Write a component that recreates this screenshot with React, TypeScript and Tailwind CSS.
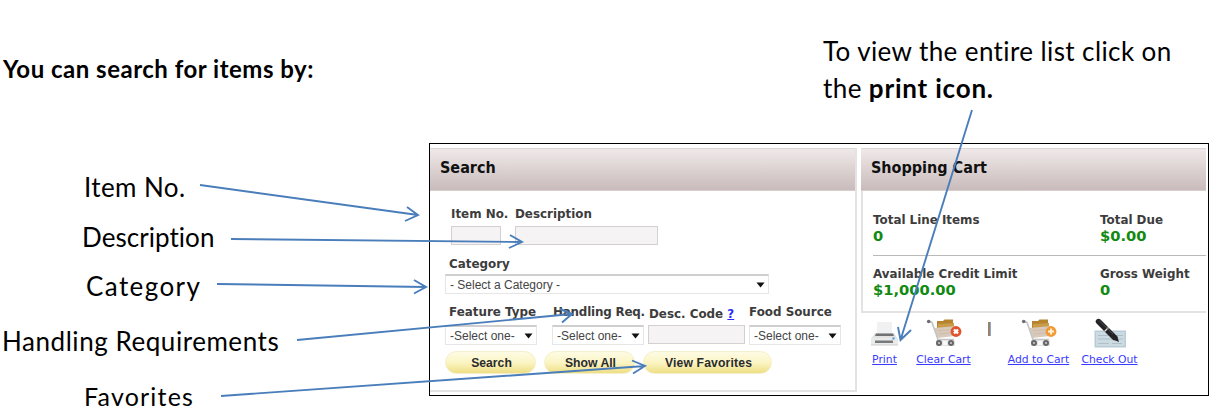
import type { ReactNode } from "react";
import clsx from "clsx";

const arrows = [
  "M200 185L418 215M407 207L418 215L405 221",
  "M231 239L522 242M510 235L522 242L509 248",
  "M217 284L426 287M414 280L426 287L414 293.5",
  "M297 340L572 314M560 309L572 314L562 322.5",
  "M221 396L645 366M632 360.5L645 366L633 373.5",
  "M972 110L900.5 340M898 327L900.5 340L911 330",
];

export default function App() {
  return (
    <div className="relative flex h-[410px] w-[1224px] overflow-hidden bg-white">
      <Notes />
      <div className="flex w-[795px] shrink-0 flex-col">
        <p className="mt-[33px] ml-[394px] h-[73px] font-['Lato',sans-serif] text-[26px] leading-[37px] tracking-[0.4px] whitespace-nowrap text-black">
          To view the entire list click on
          <br />
          the <strong className="font-bold tracking-[0.8px]">print icon.</strong>
        </p>
        <div className="mt-[37px] flex h-[253px] w-[780px] gap-[4px] border border-black pt-[4px] font-['DejaVu_Sans',sans-serif]">
          <SearchPanel />
          <CartPanel />
        </div>
      </div>
      <svg
        className="pointer-events-none absolute inset-0"
        width="1224"
        height="410"
        fill="none"
        stroke="#4a7ebb"
        strokeWidth="1.9"
      >
        {arrows.map((d) => (
          <path key={d} d={d} />
        ))}
      </svg>
    </div>
  );
}

function Notes() {
  return (
    <div className="flex w-[429px] shrink-0 flex-col font-['Lato',sans-serif] text-[26px] leading-[32px] whitespace-nowrap text-black [font-variant-ligatures:none]">
      <h1 className="mt-[53px] ml-[3px] text-[24px] leading-[32px] font-bold tracking-[0.5px]">
        You can search for items by:
      </h1>
      <p className="mt-[86px] ml-[84px] tracking-[0.4px]">Item No.</p>
      <p className="mt-[18px] ml-[82px] tracking-[0.05px]">Description</p>
      <p className="mt-[17px] ml-[86px] tracking-[1.4px]">Category</p>
      <p className="mt-[23px] ml-[2px] tracking-[0.55px]">Handling Requirements</p>
      <p className="mt-[25px] ml-[84px] text-[25px] leading-[28px] tracking-[1.2px]">
        Favorites
      </p>
    </div>
  );
}

function PanelTitle({ children }: { children: ReactNode }) {
  return (
    <h2 className="h-[43px] border-t border-b border-t-[#dcd6d6] border-b-[#d8cece] bg-linear-to-b from-[#f0e9e9] to-[#c9bbbb] pl-[10px] font-['DejaVu_Sans_Condensed','DejaVu_Sans',sans-serif] text-[16px] leading-[37px] font-bold text-[#111] [font-stretch:condensed]">
      {children}
    </h2>
  );
}

function Label({ children, className }: { children: ReactNode; className?: string }) {
  return (
    <span
      className={clsx(
        "block text-[11.9px] leading-[14px] font-bold whitespace-nowrap text-[#3c3c3c]",
        className
      )}
    >
      {children}
    </span>
  );
}

function TextBox({ className }: { className: string }) {
  return (
    <div
      className={clsx("h-[19px] border border-[#d6cfd1] bg-[#f6f3f5]", className)}
    />
  );
}

function SelectBox({ children, className }: { children: ReactNode; className: string }) {
  return (
    <div
      className={clsx(
        "flex h-[20px] items-center justify-between border border-t-2 border-[#e6e6e6] border-t-[#cfcfcf] bg-white pr-[3px] pl-[4px] font-['Liberation_Sans',sans-serif] text-[12px] leading-[14px] whitespace-nowrap text-[#444]",
        className
      )}
    >
      {children}
      <svg width="9" height="6" viewBox="0 0 9 6" className="shrink-0">
        <path d="M0.5 0.5H8.5L4.5 5.5Z" fill="#111" />
      </svg>
    </div>
  );
}

function PillButton({ children, className }: { children: ReactNode; className: string }) {
  return (
    <button
      className={clsx(
        "h-[23px] rounded-full border border-[#f5efcb] bg-linear-to-b from-[#fdfbe4] via-[#fbf5c4] to-[#eede83] pt-px pl-[2px] font-['Liberation_Sans',sans-serif] text-[12.2px] leading-[20px] font-bold text-[#2b2b2b]",
        className
      )}
    >
      {children}
    </button>
  );
}

function SearchPanel() {
  return (
    <section className="h-[244px] w-[427px] border-r-2 border-b-2 border-[#e4e2e2]">
      <PanelTitle>Search</PanelTitle>
      <div className="pt-[16px] pl-[15px]">
        <div className="flex gap-[14px] pl-[6px]">
          <div className="w-[50px]">
            <Label>Item No.</Label>
            <TextBox className="mt-[5px] w-[50px]" />
          </div>
          <div>
            <Label>Description</Label>
            <TextBox className="mt-[5px] w-[143px]" />
          </div>
        </div>
        <Label className="mt-[12px] pl-[4px]">Category</Label>
        <SelectBox className="mt-[3px] w-[324px]">- Select a Category -</SelectBox>
        <div className="mt-[11px] flex">
          <div className="w-[107px]">
            <Label className="pl-[4px]">Feature Type</Label>
            <SelectBox className="mt-[6px] w-[92px]">-Select one-</SelectBox>
          </div>
          <div className="w-[96px]">
            <Label className="pl-px tracking-[-0.2px]">Handling Req.</Label>
            <SelectBox className="mt-[6px] w-[92px]">-Select one-</SelectBox>
          </div>
          <div className="w-[101px]">
            <Label className="pt-[2px] pl-px">
              Desc. Code <a className="text-[#2a2aff] underline">?</a>
            </Label>
            <TextBox className="mt-[4px] w-[97px]" />
          </div>
          <div>
            <Label>Food Source</Label>
            <SelectBox className="mt-[6px] w-[92px]">-Select one-</SelectBox>
          </div>
        </div>
        <div className="mt-[6px] flex gap-[8px]">
          <PillButton className="w-[91px]">Search</PillButton>
          <PillButton className="w-[91px]">Show All</PillButton>
          <PillButton className="w-[129px] tracking-[0.15px]">View Favorites</PillButton>
        </div>
      </div>
    </section>
  );
}

function Stat({ label, value }: { label: string; value: string }) {
  return (
    <div>
      <Label>{label}</Label>
      <span className="block text-[14.7px] leading-[18px] font-bold text-[#118a11]">
        {value}
      </span>
    </div>
  );
}

function CartPanel() {
  return (
    <section className="w-[345px]">
      <div className="h-[165px] border-b-2 border-l-2 border-[#e4e2e2]">
        <div className="-ml-[2px]">
          <PanelTitle>Shopping Cart</PanelTitle>
        </div>
        <div className="ml-[10px] grid h-[65px] grid-cols-[227px_1fr] border-b border-[#b9b9b9] pt-[22px]">
          <Stat label="Total Line Items" value="0" />
          <Stat label="Total Due" value="$0.00" />
        </div>
        <div className="ml-[10px] grid grid-cols-[227px_1fr] pt-[11px]">
          <Stat label="Available Credit Limit" value="$1,000.00" />
          <Stat label="Gross Weight" value="0" />
        </div>
      </div>
      <div className="flex pt-[5px] pl-[10px] text-[10.8px] leading-[14px] whitespace-nowrap text-[#3a3aff]">
        <CartAction text="Print" className="w-[27px]">
          <PrinterIcon />
        </CartAction>
        <CartAction text="Clear Cart" className="ml-[16px] w-[59px]">
          <TrolleyIcon remove />
        </CartAction>
        <div className="mt-[4px] ml-[15px] h-[14px] w-[3px] border-r border-l-2 border-r-[#8fa6cf] border-l-[#96836f]" />
        <CartAction text="Add to Cart" className="ml-[15px] w-[65px]">
          <TrolleyIcon />
        </CartAction>
        <CartAction text="Check Out" className="ml-[10px] w-[57px]">
          <ChequeIcon />
        </CartAction>
      </div>
    </section>
  );
}

function CartAction({
  text,
  className,
  children,
}: {
  text: string;
  className: string;
  children: ReactNode;
}) {
  return (
    <div className={clsx("flex flex-col items-center", className)}>
      {children}
      <a className="mt-[5px] underline">{text}</a>
    </div>
  );
}

function PrinterIcon() {
  return (
    <svg width="28" height="30" viewBox="0 0 28 30" className="shrink-0">
      <path d="M6 4H21V17H6Z" fill="#f1f1f1" />
      <path d="M4 15H23L27 21V27H0V21Z" fill="#e2e2e2" />
      <path d="M5 15.5H22L23 18H4Z" fill="#6f7173" />
      <path d="M0 20H27V27H0Z" fill="#e9eaea" />
      <path d="M4 22.5H22V25H4Z" fill="#77797b" />
      <path d="M0 27H27" stroke="#cfcfcf" />
      <circle cx="22.5" cy="20.5" r="1.2" fill="#5ea0dc" />
    </svg>
  );
}

function TrolleyIcon({ remove }: { remove?: boolean }) {
  return (
    <svg width="36" height="30" viewBox="0 0 36 30" className="shrink-0">
      <path d="M11 10V3H17L18.5 1.5H27V10H11Z" fill="#b5842c" />
      <path d="M12 6L28 5V11H12Z" fill="#c99c4a" />
      <path d="M8 10L31 8L29 18L11 20Z" fill="#d8cabb" />
      <path d="M12 12.5L28 11.5M13 16L28 14.5" stroke="#cbb9a4" strokeWidth="0.8" />
      <path d="M3 3.5L6 4.5L12 21.5H28" fill="none" stroke="#c4c4c4" strokeWidth="1.6" />
      <circle cx="2.7" cy="3.5" r="1.8" fill="#6d6d70" />
      <path d="M10 22H29V28H10Z" fill="#e3e3e3" />
      <path d="M17 23H21V27H17Z" fill="#fafafa" />
      <circle cx="13" cy="25" r="3" fill="#66666a" />
      <circle cx="13" cy="25" r="1.1" fill="#c9c9c9" />
      <circle cx="25" cy="25" r="3" fill="#66666a" />
      <circle cx="25" cy="25" r="1.1" fill="#c9c9c9" />
      {remove ? (
        <>
          <circle cx="30" cy="13.5" r="5.4" fill="#e0552d" />
          <path d="M28 11.5L32 15.5M32 11.5L28 15.5" stroke="#fff" strokeWidth="2.4" />
        </>
      ) : (
        <>
          <circle cx="30" cy="13.5" r="5.4" fill="#f29a3a" />
          <path d="M30 10.5V16.5M27 13.5H33" stroke="#fff3d8" strokeWidth="1.8" />
        </>
      )}
    </svg>
  );
}

function ChequeIcon() {
  return (
    <svg width="34" height="30" viewBox="0 0 34 30" className="shrink-0">
      <path d="M1.5 12.5H33V29.5H1.5Z" fill="#b9cbd4" />
      <path d="M3 14H31.5V28H3Z" fill="#ccdae1" />
      <path d="M5 17.5H30M5 21H30M5 25.5H16M19 25.5H29" stroke="#adbfc9" />
      <path d="M5.5 3.5L21.5 19.5" stroke="#232326" strokeWidth="5.4" strokeLinecap="round" />
      <path d="M20 21.5L24 17.5L26 24Z" fill="#232326" />
      <path d="M11.5 13.5L15.5 9.5" stroke="#e2e2e2" strokeWidth="1.3" />
      <path d="M6 2.5L20 16" stroke="#55555a" strokeWidth="0.8" />
    </svg>
  );
}
